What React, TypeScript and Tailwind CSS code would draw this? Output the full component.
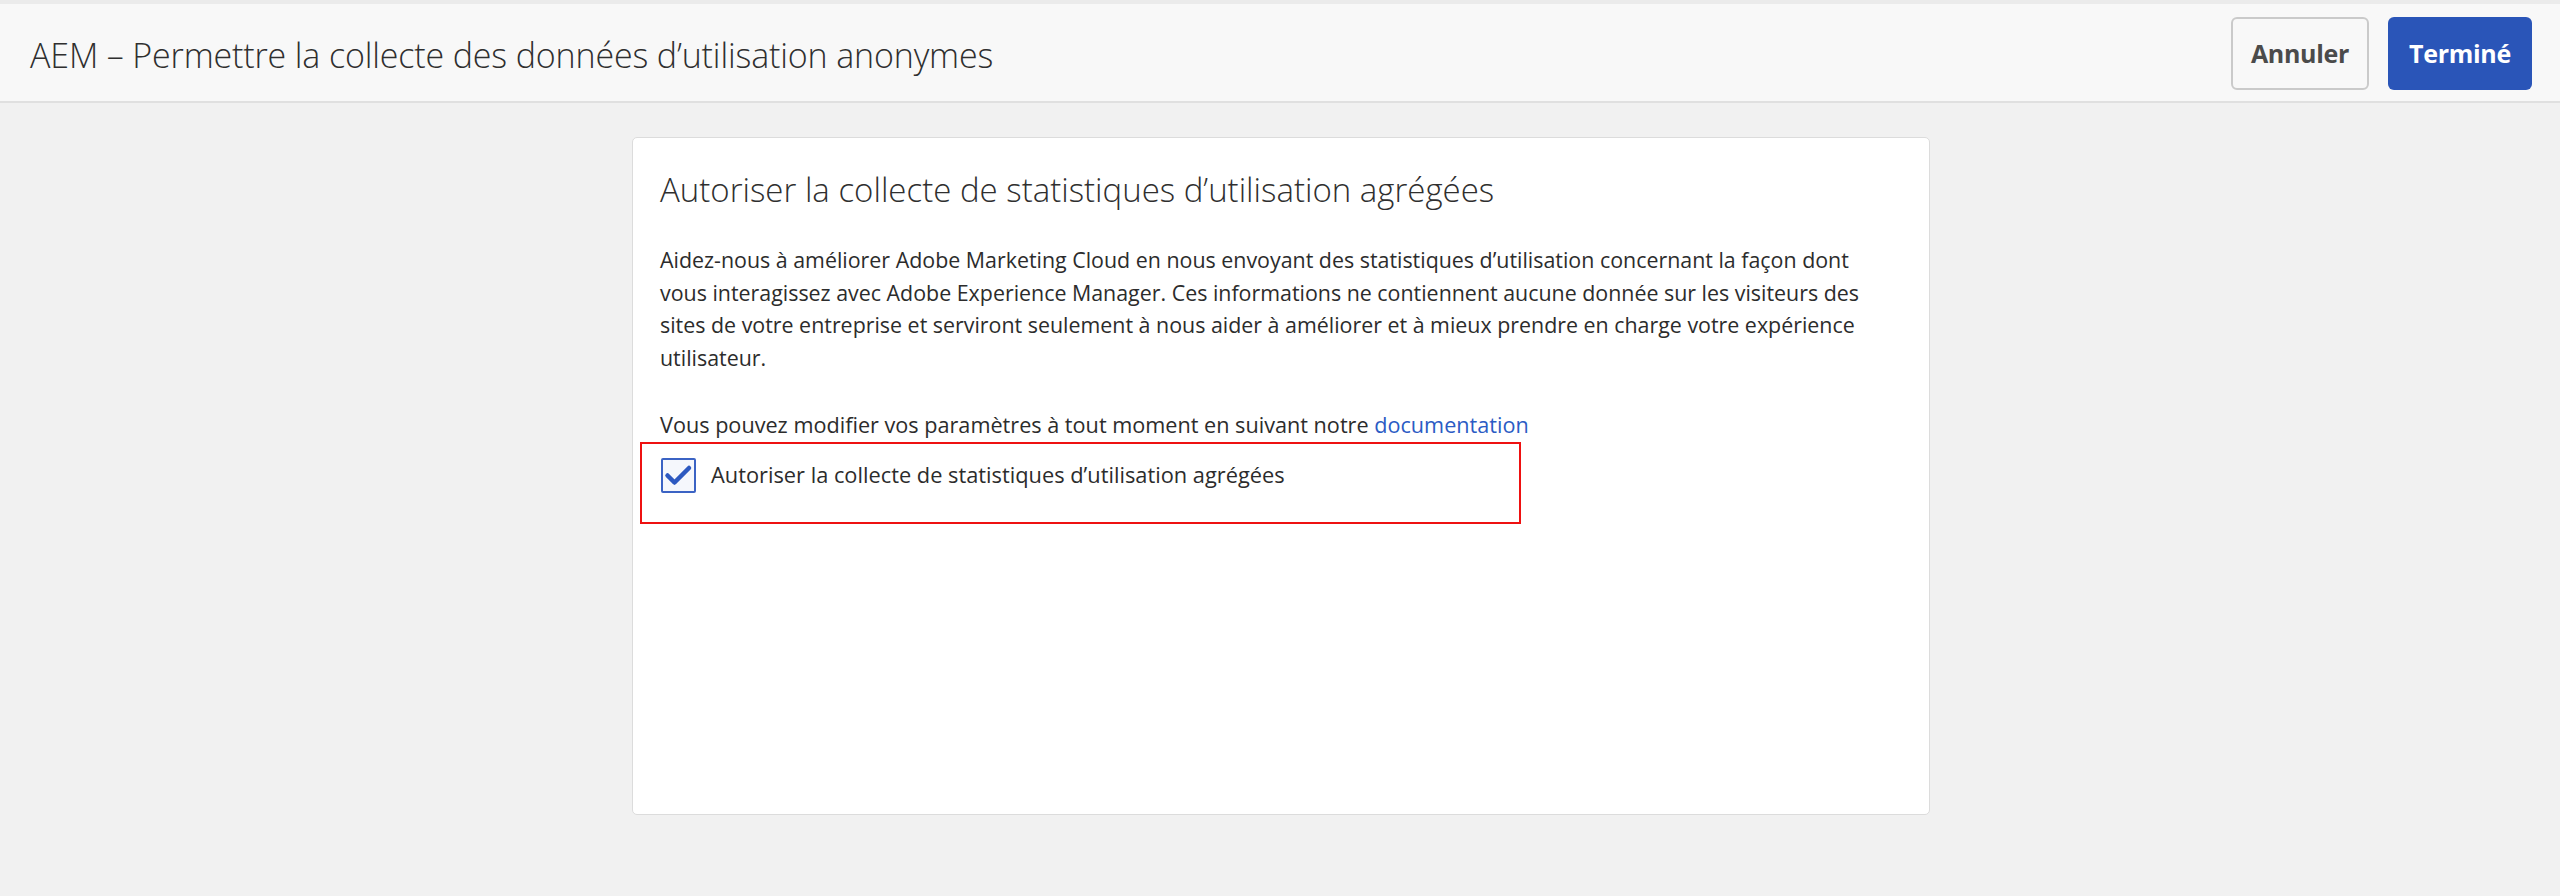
import React from "react";

export default function App() {
  const font = { fontFamily: '"Open Sans", "Liberation Sans", sans-serif' };
  return (
    <div className="min-h-[896px] w-full bg-[#f1f1f1] flex flex-col" style={font}>
      <header className="h-[103px] shrink-0 bg-[#f8f8f8] border-t-4 border-t-[#ebebeb] border-b-2 border-b-[#e0e0e0] flex items-center justify-between pl-[30px] pr-[28px]">
        <h1 className="text-[34px] font-light text-[#2f2f2f] tracking-[-0.15px] leading-[40px] pt-[4px]">
          AEM – Permettre la collecte des données d’utilisation anonymes
        </h1>
        <div className="flex items-center gap-[19px] pt-[2px]">
          <button className="h-[73px] w-[138px] rounded-[6px] border-2 border-[#cacaca] bg-[#f8f8f8] text-[25px] font-bold text-[#4b4b4b] tracking-[-0.3px]">
            Annuler
          </button>
          <button className="h-[73px] w-[144px] rounded-[6px] bg-[#2a55b8] text-[25px] font-bold text-white tracking-[-0.3px]">
            Terminé
          </button>
        </div>
      </header>
      <main className="flex justify-center pt-[34px] pl-[2px]">
        <section className="w-[1298px] h-[678px] bg-white border border-[#dcdcdc] rounded-[5px] pt-[32px] pl-[27px] pr-[27px]">
          <h2 className="text-[33px] font-light leading-[40px] text-[#2f2f2f]">
            Autoriser la collecte de statistiques d’utilisation agrégées
          </h2>
          <p className="mt-[34px] text-[21.4px] leading-[32.7px] text-[#2c2c2c] whitespace-nowrap">
            Aidez-nous à améliorer Adobe Marketing Cloud en nous envoyant des statistiques d’utilisation concernant la façon dont
            <br />
            vous interagissez avec Adobe Experience Manager. Ces informations ne contiennent aucune donnée sur les visiteurs des
            <br />
            sites de votre entreprise et serviront seulement à nous aider à améliorer et à mieux prendre en charge votre expérience
            <br />
            utilisateur.
          </p>
          <p className="mt-[34px] text-[21.65px] leading-[32.7px] text-[#2c2c2c] whitespace-nowrap">
            Vous pouvez modifier vos paramètres à tout moment en suivant notre{" "}
            <a className="text-[#2b5bc4]">documentation</a>
          </p>
          <div className="ml-[-20px] w-[881px] h-[82px] border-2 border-[#ee1111] flex items-start pt-[14px] pl-[19px]">
            <label className="flex items-center gap-[15px]">
              <span className="w-[35px] h-[35px] border-2 border-[#3b63c4] bg-[#f5f7fc] rounded-[2px] flex items-center justify-center">
                <svg width="31" height="31" viewBox="0 0 31 31">
                  <path d="M4.5 15.5 L11.5 22.5 L26 8" fill="none" stroke="#2d59c0" strokeWidth="4.5" strokeLinecap="round" strokeLinejoin="round" />
                </svg>
              </span>
              <span className="text-[21.8px] leading-[32px] text-[#2c2c2c]">
                Autoriser la collecte de statistiques d’utilisation agrégées
              </span>
            </label>
          </div>
        </section>
      </main>
    </div>
  );
}
